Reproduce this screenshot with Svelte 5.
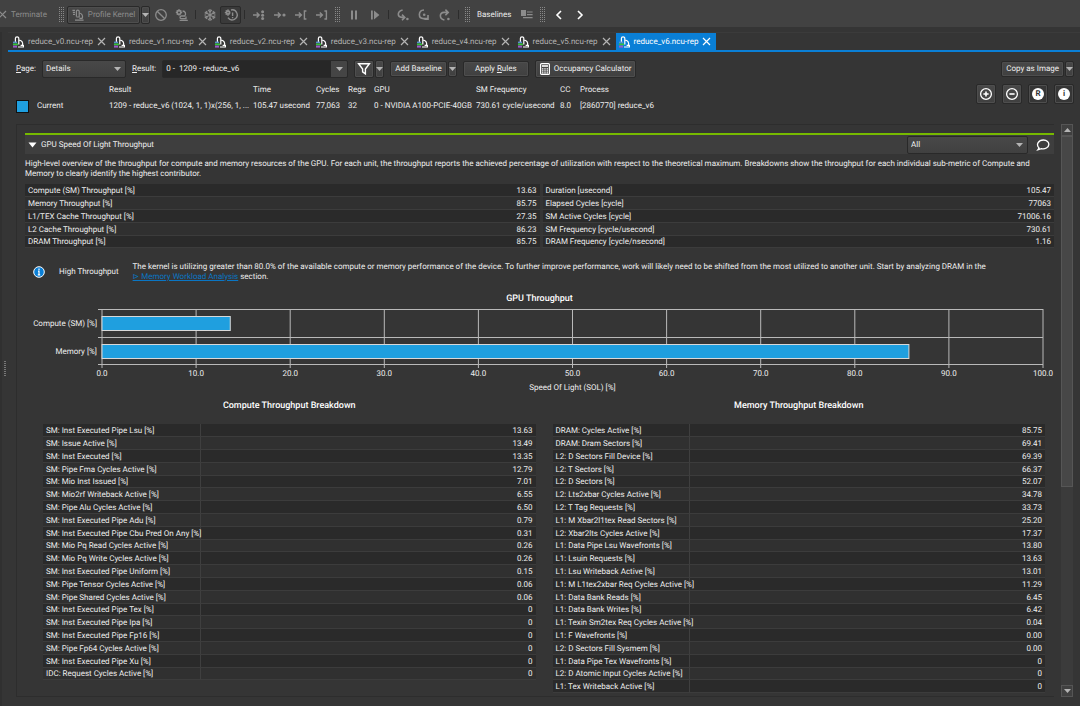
<script lang="ts">
	const tabs = ['v0', 'v1', 'v2', 'v3', 'v4', 'v5', 'v6'].map((v) => `reduce_${v}.ncu-rep`);
	let activeTab = $state(6);
	let open = $state(true);

	const speedOfLight = [
		['Compute (SM) Throughput [%]', '13.63', 'Duration [usecond]', '105.47'],
		['Memory Throughput [%]', '85.75', 'Elapsed Cycles [cycle]', '77063'],
		['L1/TEX Cache Throughput [%]', '27.35', 'SM Active Cycles [cycle]', '71006.16'],
		['L2 Cache Throughput [%]', '86.23', 'SM Frequency [cycle/usecond]', '730.61'],
		['DRAM Throughput [%]', '85.75', 'DRAM Frequency [cycle/nsecond]', '1.16']
	];

	const bars = [
		{ label: 'Compute (SM) [%]', value: 13.63, y: 7 },
		{ label: 'Memory [%]', value: 85.75, y: 35 }
	];
	const ticks = [0, 10, 20, 30, 40, 50, 60, 70, 80, 90, 100];

	const breakdowns = [
		{
			title: 'Compute Throughput Breakdown',
			kind: 'compute',
			rows: [
				['SM: Inst Executed Pipe Lsu [%]', '13.63'],
				['SM: Issue Active [%]', '13.49'],
				['SM: Inst Executed [%]', '13.35'],
				['SM: Pipe Fma Cycles Active [%]', '12.79'],
				['SM: Mio Inst Issued [%]', '7.01'],
				['SM: Mio2rf Writeback Active [%]', '6.55'],
				['SM: Pipe Alu Cycles Active [%]', '6.50'],
				['SM: Inst Executed Pipe Adu [%]', '0.79'],
				['SM: Inst Executed Pipe Cbu Pred On Any [%]', '0.31'],
				['SM: Mio Pq Read Cycles Active [%]', '0.26'],
				['SM: Mio Pq Write Cycles Active [%]', '0.26'],
				['SM: Inst Executed Pipe Uniform [%]', '0.15'],
				['SM: Pipe Tensor Cycles Active [%]', '0.06'],
				['SM: Pipe Shared Cycles Active [%]', '0.06'],
				['SM: Inst Executed Pipe Tex [%]', '0'],
				['SM: Inst Executed Pipe Ipa [%]', '0'],
				['SM: Inst Executed Pipe Fp16 [%]', '0'],
				['SM: Pipe Fp64 Cycles Active [%]', '0'],
				['SM: Inst Executed Pipe Xu [%]', '0'],
				['IDC: Request Cycles Active [%]', '0']
			]
		},
		{
			title: 'Memory Throughput Breakdown',
			kind: 'memory',
			rows: [
				['DRAM: Cycles Active [%]', '85.75'],
				['DRAM: Dram Sectors [%]', '69.41'],
				['L2: D Sectors Fill Device [%]', '69.39'],
				['L2: T Sectors [%]', '66.37'],
				['L2: D Sectors [%]', '52.07'],
				['L2: Lts2xbar Cycles Active [%]', '34.78'],
				['L2: T Tag Requests [%]', '33.73'],
				['L1: M Xbar2l1tex Read Sectors [%]', '25.20'],
				['L2: Xbar2lts Cycles Active [%]', '17.37'],
				['L1: Data Pipe Lsu Wavefronts [%]', '13.80'],
				['L1: Lsuin Requests [%]', '13.63'],
				['L1: Lsu Writeback Active [%]', '13.01'],
				['L1: M L1tex2xbar Req Cycles Active [%]', '11.29'],
				['L1: Data Bank Reads [%]', '6.45'],
				['L1: Data Bank Writes [%]', '6.42'],
				['L1: Texin Sm2tex Req Cycles Active [%]', '0.04'],
				['L1: F Wavefronts [%]', '0.00'],
				['L2: D Sectors Fill Sysmem [%]', '0.00'],
				['L1: Data Pipe Tex Wavefronts [%]', '0'],
				['L2: D Atomic Input Cycles Active [%]', '0'],
				['L1: Tex Writeback Active [%]', '0']
			]
		}
	];
</script>

{#snippet microscope(colored: boolean)}
	<svg class="icon" viewBox="0 0 12 12" width="12" height="12" fill="none" stroke="currentColor">
		{#if colored}
			<g stroke="#fff" stroke-width="1.2">
				<path d="M3.4 6.2 V2.4 C3.4 0.4 6.8 0.4 6.8 2.4 V8.6 M6.8 4 C9.6 4.2 11.4 6.6 10.4 9.2 M6 11 H11.4 V9.4 H8.6" />
			</g>
			<path d="M1 6.4 H5" stroke="#5a8fd0" stroke-width="1.6" />
			<path d="M1 8.4 H6" stroke="#35c43a" stroke-width="1.8" />
			<path d="M1 10.6 H5" stroke="#9a5ac8" stroke-width="2" />
		{:else}
			<path d="M4.4 7.4 V2.4 C4.4 0.6 7.2 0.6 7.2 2.4 V8 H4.4 M7.2 4 C10 4.4 11.4 7 10 9.6 M3 11.2 H11.6 M7.4 9.4 H10.6" stroke-width="1.2" />
			<path d="M0.4 1.4 H3 M0.8 3.4 H3 M1 5.4 H3" stroke-width="1.2" />
		{/if}
	</svg>
{/snippet}

{#snippet cross()}
	<svg class="icon" viewBox="0 0 9 9" width="9" height="9" fill="none" stroke="currentColor" stroke-width="1.2">
		<path d="M1 1 L8 8 M8 1 L1 8" />
	</svg>
{/snippet}

{#snippet caret()}
	<svg class="icon" viewBox="0 0 7 4" width="7" height="4"><path d="M0 0 H7 L3.5 4 Z" fill="#b4b4b4" /></svg>
{/snippet}

<div class="app">
	<header class="toolbar">
		<button class="tool terminate" disabled>{@render cross()}<span>Terminate</span></button>
		<span class="grip"></span>
		<button class="raised profile" disabled>{@render microscope(false)}Profile Kernel</button>
		<button class="raised drop" disabled aria-label="Profile options">{@render caret()}</button>
		<button class="tool" aria-label="Cancel">
			<svg viewBox="0 0 14 14" width="14" height="14" fill="none" stroke="currentColor" stroke-width="1.3">
				<circle cx="7" cy="7" r="5.3" /><path d="M3.2 3.2 L10.8 10.8" />
			</svg>
		</button>
		<button class="tool" aria-label="Profile series">
			<svg viewBox="0 0 14 14" width="14" height="14" fill="none" stroke="currentColor" stroke-width="1.1">
				<circle cx="4" cy="4.4" r="1.8" stroke-width="1.6" /><path d="M4 1 V2.4 M4 6.4 V7.8 M0.8 4.4 H2 M6 4.4 H7.2 M1.8 2.2 L2.6 3 M6.2 2.2 L5.4 3 M1.8 6.6 L2.6 5.8" />
				<path d="M7.6 3 C10.4 3.2 11.4 5.6 9.8 8 H6.4 C4.6 8 4.4 10.4 6.4 10.6 H11 V8.6 M4.6 12.4 H12.8" stroke-width="1.3" />
			</svg>
		</button>
		<span class="sep"></span>
		<button class="tool" aria-label="Freeze">
			<svg viewBox="0 0 14 14" width="14" height="14" fill="none" stroke="currentColor" stroke-width="1.2">
				<path d="M7 1 V13 M1.8 4 L12.2 10 M12.2 4 L1.8 10" />
				<path d="M5.2 2 L7 3.8 L8.8 2 M5.2 12 L7 10.2 L8.8 12 M1.6 6.2 L4 5.4 L3.6 2.8 M12.4 7.8 L10 8.6 L10.4 11.2 M12.4 6.2 L10 5.4 L10.4 2.8 M1.6 7.8 L4 8.6 L3.6 11.2" />
			</svg>
		</button>
		<button class="tool pressed" aria-label="Auto profile">
			<svg viewBox="0 0 14 14" width="14" height="14" fill="none" stroke="currentColor" stroke-width="1.2">
				<circle cx="4" cy="4.6" r="1.6" stroke-width="1.8" /><path d="M4 1.2 V2.6 M4 6.6 V8 M0.8 4.6 H2 M1.8 2.4 L2.6 3.2 M1.8 6.8 L2.6 6" />
				<path d="M7 2 A5 5 0 1 1 4 9.6 M8.6 4.4 V8 M8.6 9 V10.2" stroke-width="1.4" />
			</svg>
		</button>
		<span class="sep"></span>
		<button class="tool" aria-label="Next call">
			<svg viewBox="0 0 14 14" width="14" height="14" fill="none" stroke="currentColor" stroke-width="1.4">
				<path d="M1 7 H7 M4.6 4.4 L7.2 7 L4.6 9.6" />
				<g fill="currentColor" stroke="none"><circle cx="10.6" cy="3.8" r="1.5" /><circle cx="10.6" cy="7.2" r="1.5" /><circle cx="10.6" cy="10.6" r="1.5" /></g>
			</svg>
		</button>
		<button class="tool" aria-label="Next kernel">
			<svg viewBox="0 0 14 14" width="14" height="14" fill="none" stroke="currentColor" stroke-width="1.4">
				<path d="M1 7 H7 M4.8 4.6 L7.4 7 L4.8 9.4" /><circle cx="11" cy="7" r="1.6" fill="currentColor" stroke="none" />
			</svg>
		</button>
		<button class="tool" aria-label="Range start">
			<svg viewBox="0 0 14 14" width="14" height="14" fill="none" stroke="currentColor" stroke-width="1.4">
				<path d="M1 7 H7 M4.8 4.6 L7.4 7 L4.8 9.4 M12.4 3 H10.4 V11 H12.4" />
			</svg>
		</button>
		<button class="tool" aria-label="Range end">
			<svg viewBox="0 0 14 14" width="14" height="14" fill="none" stroke="currentColor" stroke-width="1.4">
				<path d="M1 7 H7 M4.8 4.6 L7.4 7 L4.8 9.4 M9.4 3 H11.4 V11 H9.4" />
			</svg>
		</button>
		<span class="grip"></span>
		<button class="tool" aria-label="Pause">
			<svg viewBox="0 0 14 14" width="14" height="14" fill="currentColor"><path d="M4 2.4 H6 V11.6 H4 Z M8 2.4 H10 V11.6 H8 Z" /></svg>
		</button>
		<button class="tool" aria-label="Resume">
			<svg viewBox="0 0 14 14" width="14" height="14" fill="currentColor"><path d="M3 2.4 H4.8 V11.6 H3 Z M6 2.4 L11.4 7 L6 11.6 Z" /></svg>
		</button>
		<span class="sep"></span>
		<button class="tool" aria-label="Step in">
			<svg viewBox="0 0 14 14" width="14" height="14" fill="none" stroke="currentColor" stroke-width="1.6">
				<path d="M6.6 2 C1 3.4 1 9 6 9.4 H8 M6 6.6 L8.8 9.4 L6 12.2" /><circle cx="11.4" cy="11" r="1.3" fill="currentColor" stroke="none" />
			</svg>
		</button>
		<button class="tool" aria-label="Step over">
			<svg viewBox="0 0 14 14" width="14" height="14" fill="none" stroke="currentColor" stroke-width="1.6">
				<path d="M7 2 C0.8 2.6 1 10.4 6.6 10.6 H10.4 M11 7 V11.2 H7.4" /><circle cx="7.2" cy="6.8" r="1.3" fill="currentColor" stroke="none" />
			</svg>
		</button>
		<button class="tool" aria-label="Step out">
			<svg viewBox="0 0 14 14" width="14" height="14" fill="none" stroke="currentColor" stroke-width="1.6">
				<path d="M6.4 12 C0.8 10.8 1.4 4.6 6 4.4 H9.4 M7.4 1.6 L10.2 4.4 L7.4 7.2" /><circle cx="10.4" cy="11" r="1.3" fill="currentColor" stroke="none" />
			</svg>
		</button>
		<span class="sep"></span>
		<span class="grip"></span>
		<span class="baselines">Baselines</span>
		<button class="tool" aria-label="Baseline list">
			<svg viewBox="0 0 14 14" width="14" height="14" fill="currentColor"><path d="M1 2 H6 V8 H1 Z M7 3.4 H12.6 V4.6 H7 Z M7 6 H12.6 V7.2 H7 Z M3 9 H12.6 V10.2 H3 Z" /></svg>
		</button>
		<span class="grip"></span>
		<button class="tool nav" aria-label="Back">
			<svg viewBox="0 0 14 14" width="14" height="14" fill="none" stroke="currentColor" stroke-width="1.6"><path d="M9 3 L5 7 L9 11" /></svg>
		</button>
		<button class="tool nav" aria-label="Forward">
			<svg viewBox="0 0 14 14" width="14" height="14" fill="none" stroke="currentColor" stroke-width="1.6"><path d="M5 3 L9 7 L5 11" /></svg>
		</button>
	</header>

	<div class="workspace">
		<div class="splitter"><span class="handle"></span></div>
		<main class="document">
			<nav class="tabs">
				{#each tabs as tab, i (tab)}
					<button class="tab" class:active={i === activeTab} onclick={() => (activeTab = i)}>
						{@render microscope(true)}
						<span>{tab}</span>
						{@render cross()}
					</button>
				{/each}
			</nav>

			<div class="controls">
				<label for="page"><u>P</u>age:</label>
				<span class="select page">
					<select id="page"><option>Details</option></select>
					{@render caret()}
				</span>
				<label for="result"><u>R</u>esult:</label>
				<span class="select result">
					<select id="result"><option>0 -&nbsp; 1209 - reduce_v6</option></select>
					{@render caret()}
				</span>
				<span class="pair">
					<button class="raised filter" aria-label="Filter">
						<svg viewBox="0 0 14 14" width="14" height="14" fill="none" stroke="#fff" stroke-width="1.4"><path d="M1.6 1.8 H12.4 L8.4 7 V11.8 L5.6 9.8 V7 Z" /></svg>
					</button>
					<button class="raised drop" aria-label="Filter options">{@render caret()}</button>
				</span>
				<span class="pair">
					<button class="raised small">Add Baseline</button>
					<button class="raised small drop" aria-label="Baseline options">{@render caret()}</button>
				</span>
				<button class="raised small apply"><span>Apply <u>R</u>ules</span></button>
				<button class="raised occupancy">
					<svg viewBox="0 0 10 12" width="10" height="12">
						<rect x="0.6" y="0.6" width="8.8" height="10.8" rx="1" fill="none" stroke="#fff" stroke-width="1.2" />
						<path d="M2 3 H8" stroke="#fff" stroke-width="1.6" />
						<path d="M2 5.8 H8 M2 7.8 H8 M2 9.8 H8" stroke="#fff" stroke-width="1.2" stroke-dasharray="1.4 0.9" />
					</svg>
					Occupancy Calculator
				</button>
				<span class="pair copy">
					<button class="raised small">Copy as Image</button>
					<button class="raised small drop" aria-label="Copy options">{@render caret()}</button>
				</span>
			</div>

			<div class="summary">
				<table class="results">
					<thead>
						<tr>
							<th class="c-name"></th>
							<th class="c-result">Result</th>
							<th class="c-time">Time</th>
							<th class="c-cycles">Cycles</th>
							<th class="c-regs">Regs</th>
							<th class="c-gpu">GPU</th>
							<th class="c-freq">SM Frequency</th>
							<th class="c-cc">CC</th>
							<th>Process</th>
						</tr>
					</thead>
					<tbody>
						<tr>
							<td><span class="current"><i class="swatch"></i>Current</span></td>
							<td>1209 - reduce_v6 (1024, 1, 1)x(256, 1, ...</td>
							<td>105.47 usecond</td>
							<td>77,063</td>
							<td>32</td>
							<td>0 - NVIDIA A100-PCIE-40GB</td>
							<td>730.61 cycle/usecond</td>
							<td>8.0</td>
							<td>[2860770] reduce_v6</td>
						</tr>
					</tbody>
				</table>
				<div class="round-buttons">
					<button class="raised" aria-label="Expand all">
						<svg viewBox="0 0 14 14" width="14" height="14" fill="none" stroke="#fff" stroke-width="1.3"><circle cx="7" cy="7" r="5.4" /><path d="M4.4 7 H9.6 M7 4.4 V9.6" stroke-width="1.6" /></svg>
					</button>
					<button class="raised" aria-label="Collapse all">
						<svg viewBox="0 0 14 14" width="14" height="14" fill="none" stroke="#fff" stroke-width="1.3"><circle cx="7" cy="7" r="5.4" /><path d="M4.4 7 H9.6" stroke-width="1.6" /></svg>
					</button>
					<button class="raised flat" aria-label="Rules"><span class="disc">R</span></button>
					<button class="raised flat" aria-label="Info"><span class="disc">i</span></button>
				</div>
			</div>

			<div class="scroll-area">
				<div class="content">
					<section>
						<div class="section-head">
							<button class="toggle" aria-expanded={open} onclick={() => (open = !open)}>
								<svg viewBox="0 0 9 6" width="9" height="6"><path d="M0.5 0.5 H8.5 L4.5 5.5 Z" fill="#fff" /></svg>
								GPU Speed Of Light Throughput
							</button>
							<span class="select scope">
								<select aria-label="Breakdown scope"><option>All</option></select>
								{@render caret()}
							</span>
							<button class="tool comment" aria-label="Comment">
								<svg viewBox="0 0 14 14" width="14" height="14" fill="none" stroke="#fff" stroke-width="1.3"><path d="M3 10 C-0.4 6.4 2.6 2 7.4 2 C11 2 13 4.4 12.8 6.6 C12.6 9.6 9 11.4 5.4 10.6 L1.8 11.8 Z" /></svg>
							</button>
						</div>
						{#if open}
							<p class="overview">
								High-level overview of the throughput for compute and memory resources of the GPU. For each unit, the
								throughput reports the achieved percentage of utilization with respect to the theoretical maximum.
								Breakdowns show the throughput for each individual sub-metric of Compute and Memory to clearly identify
								the highest contributor.
							</p>

							<table class="metrics speed">
								<tbody>
									{#each speedOfLight as [leftName, leftValue, rightName, rightValue]}
										<tr>
											<td>{leftName}</td>
											<td class="num">{leftValue}</td>
											<td class="second">{rightName}</td>
											<td class="num">{rightValue}</td>
										</tr>
									{/each}
								</tbody>
							</table>

							<div class="advice">
								<svg viewBox="0 0 12 12" width="12" height="12">
									<circle cx="6" cy="6" r="5.3" fill="#0a7fd6" stroke="#fff" stroke-width="1" />
									<path d="M6 2.6 V4 M5 5.2 H6 V8.6 M4.8 8.8 H7.2" stroke="#fff" stroke-width="1.2" fill="none" />
								</svg>
								<span class="advice-title">High Throughput</span>
								<p>
									The kernel is utilizing greater than 80.0% of the available compute or memory performance of the
									device. To further improve performance, work will likely need to be shifted from the most utilized
									to another unit. Start by analyzing DRAM in the <a href="#memory">⊳&nbsp;Memory Workload Analysis</a> section.
								</p>
							</div>

							<h3>GPU Throughput</h3>
							<svg class="chart" width="100%" height="84">
								<g stroke="#b9b9b9">
									{#each ticks as tick}
										<line x1="{tick}%" x2="{tick}%" y1="0" y2="59" />
									{/each}
									<line x1="-4" x2="100%" y1="0.5" y2="0.5" />
									<line x1="-4" x2="100%" y1="28.5" y2="28.5" />
									<line x1="-4" x2="100%" y1="55.5" y2="55.5" />
								</g>
								{#each bars as bar}
									<rect x="0" y={bar.y + 0.5} width="{bar.value}%" height="14" fill="#1f9fdf" stroke="#d8d8d8" />
									<text x="-5" y={bar.y + 10} text-anchor="end">{bar.label}</text>
								{/each}
								{#each ticks as tick}
									<text x="{tick}%" y="67" text-anchor="middle">{tick.toFixed(1)}</text>
								{/each}
								<text x="50%" y="81" text-anchor="middle">Speed Of Light (SOL) [%]</text>
							</svg>

							<div class="breakdowns">
								{#each breakdowns as breakdown (breakdown.kind)}
									<div class="breakdown {breakdown.kind}">
										<h3>{breakdown.title}</h3>
										<table class="metrics">
											<tbody>
												{#each breakdown.rows as [name, value]}
													<tr>
														<td class="name">{name}</td>
														<td class="num">{value}</td>
													</tr>
												{/each}
											</tbody>
										</table>
									</div>
								{/each}
							</div>
						{/if}
					</section>
				</div>
				<div class="scrollbar">
					<button aria-label="Scroll up"><svg viewBox="0 0 7 4" width="7" height="4"><path d="M0 4 H7 L3.5 0 Z" fill="#b4b4b4" /></svg></button>
					<div class="track"><div class="thumb"></div></div>
					<button aria-label="Scroll down">{@render caret()}</button>
				</div>
			</div>
		</main>
	</div>
</div>

<style>
	:global(body) {
		background: #353535;
	}

	.app {
		display: flex;
		flex-direction: column;
		min-height: 100vh;
		background: #353535;
		color: #eee;
		font: 8px/10px Roboto, sans-serif;
		text-rendering: geometricPrecision;
	}

	.app * {
		box-sizing: border-box;
	}

	button,
	select {
		font: inherit;
		color: inherit;
		text-rendering: inherit;
		margin: 0;
		padding: 0;
		border: 0;
		background: none;
	}

	svg {
		display: block;
		flex-shrink: 0;
	}

	h3 {
		margin: 0;
		font-size: 9px;
		line-height: 12px;
		font-weight: 500;
		text-align: center;
		color: #fff;
	}

	.toolbar {
		display: flex;
		align-items: center;
		height: 27px;
		padding-top: 2px;
		background: #424242;
		color: #8c8c8c;
		white-space: nowrap;
	}

	.tool {
		display: flex;
		align-items: center;
		justify-content: center;
		width: 21px;
		height: 18px;
		flex-shrink: 0;
	}

	.terminate {
		width: 58px;
		justify-content: flex-start;
		gap: 4px;
		margin-left: -2px;
	}

	.grip {
		width: 5px;
		height: 15px;
		margin: 0 3px;
		background:
			repeating-linear-gradient(transparent 0 1px, #424242 1px 2px),
			repeating-linear-gradient(90deg, #888 0 1px, transparent 1px 2px);
	}

	.sep {
		width: 1px;
		height: 9px;
		margin: 0 3px;
		background: #2c2c2c;
	}

	.raised {
		display: flex;
		align-items: center;
		justify-content: center;
		gap: 4px;
		height: 18px;
		border: 1px solid #292929;
		border-radius: 2px;
		background: linear-gradient(#484848, #404040);
		box-shadow: inset 0 0 0 1px #4e4e4e;
		white-space: nowrap;
	}

	.raised.small {
		height: 16px;
		padding: 0 4px;
	}

	.raised.drop {
		width: 9px;
		padding: 0;
		margin-left: 1px;
	}

	.profile {
		width: 73px;
	}

	.pressed {
		border: 1px solid #2a2a2a;
		border-radius: 2px;
		background: #3a3a3a;
	}

	.baselines {
		margin: 0 5px 0 4px;
		color: #eee;
	}

	.nav {
		color: #fff;
	}

	.workspace {
		display: flex;
		flex: 1;
		padding-top: 5px;
	}

	.splitter {
		display: flex;
		align-items: center;
		justify-content: center;
		width: 8px;
		border-left: 2px solid #303030;
	}

	.handle {
		width: 2px;
		height: 16px;
		background: repeating-linear-gradient(#777 0 1px, transparent 1px 2px);
	}

	.document {
		flex: 1;
		min-width: 0;
		display: flex;
		flex-direction: column;
	}

	.tabs {
		display: flex;
		padding-left: 2px;
		border-top: 1px solid #3b3b3b;
		border-bottom: 2px solid #0a7fd6;
	}

	.tab {
		display: flex;
		align-items: center;
		gap: 4px;
		height: 17px;
		padding: 0 5px 0 2px;
		color: #b4b4b4;
		white-space: nowrap;
	}

	.tab.active {
		background: #0a7fd6;
		color: #fff;
	}

	.controls {
		display: flex;
		align-items: center;
		gap: 6px;
		padding: 8px 6px 0 8px;
	}

	.select {
		position: relative;
		display: flex;
		height: 18px;
	}

	.select select {
		appearance: none;
		width: 100%;
		padding: 0 3px;
		border: 1px solid #292929;
		border-radius: 2px;
		background: linear-gradient(#484848, #404040);
		outline: 0;
	}

	.select .icon {
		position: absolute;
		right: 5px;
		top: 7px;
		pointer-events: none;
	}

	.page {
		width: 84px;
	}

	.result {
		width: 186px;
	}

	.result select {
		background: linear-gradient(#454545, #454545) right / 16px 100% no-repeat #272727;
	}

	.pair {
		display: flex;
	}

	.filter {
		width: 20px;
	}

	.apply {
		width: 66px;
	}

	.occupancy {
		padding: 0 4px;
	}

	.copy {
		margin-left: auto;
	}

	.summary {
		display: flex;
		align-items: flex-start;
		justify-content: space-between;
		padding: 6px 6px 0 8px;
	}

	.results {
		border-collapse: collapse;
		table-layout: fixed;
		width: 700px;
		white-space: nowrap;
	}

	.results th,
	.results td {
		padding: 0;
		font-weight: 400;
		text-align: left;
		height: 12px;
	}

	.results td {
		height: 20px;
	}

	.c-name {
		width: 93px;
	}

	.c-result {
		width: 144px;
	}

	.c-time {
		width: 63px;
	}

	.c-cycles {
		width: 32px;
	}

	.c-regs {
		width: 26px;
	}

	.c-gpu {
		width: 102px;
	}

	.c-freq {
		width: 84px;
	}

	.c-cc {
		width: 20px;
	}

	.current {
		display: flex;
		align-items: center;
		gap: 8px;
	}

	.swatch {
		width: 13px;
		height: 13px;
		border: 1px solid #111;
		background: #1f9fdf;
	}

	.round-buttons {
		display: flex;
		gap: 6px;
	}

	.round-buttons .raised {
		width: 20px;
		height: 20px;
	}

	.round-buttons .flat {
		background: #363636;
	}

	.disc {
		width: 12px;
		height: 12px;
		border-radius: 50%;
		background: #fff;
		color: #333;
		font-weight: 700;
		line-height: 12px;
		text-align: center;
	}

	.scroll-area {
		display: flex;
		flex: 1;
		gap: 7px;
		margin: 8px 7px 9px 8px;
	}

	.content {
		flex: 1;
		min-width: 0;
		padding: 8px 0 0 8px;
		border: 1px solid #2d2d2d;
		border-right: 0;
	}

	.section-head {
		display: flex;
		align-items: center;
		height: 21px;
		border-top: 2px solid #76b900;
		background: #3e3e3e;
	}

	.toggle {
		display: flex;
		align-items: center;
		gap: 4px;
		flex: 1;
		height: 18px;
		padding-left: 3px;
	}

	.scope {
		width: 121px;
	}

	.comment {
		margin: 0 1px 0 4px;
	}

	.overview {
		margin: 0;
		padding: 5px 0;
	}

	.metrics {
		width: 100%;
		border-collapse: separate;
		border-spacing: 0;
		table-layout: fixed;
		white-space: nowrap;
	}

	.metrics td {
		height: 13px;
		padding: 0 3px;
		line-height: 11px;
		border-bottom: 1px solid #3c3c3c;
		background: #303030;
	}

	.metrics tr:nth-child(odd) td {
		background: #2a2a2a;
	}

	.metrics tr:nth-child(5n) td {
		height: 12px;
	}

	.metrics .num {
		text-align: right;
	}

	.metrics .second {
		border-left: 3px solid #353535;
	}

	.advice {
		display: flex;
		align-items: center;
		gap: 14px;
		padding: 14px 32px 0 8px;
	}

	.advice p {
		margin: 0;
	}

	.advice-title {
		white-space: nowrap;
	}

	a {
		color: #0a76c4;
	}

	.advice + h3 {
		padding: 11px 0 4px;
	}

	.chart {
		width: calc(100% - 88px);
		margin-left: 77px;
		overflow: visible;
	}

	.chart text {
		fill: #eee;
	}

	.breakdowns {
		display: flex;
		align-items: flex-start;
		gap: 17px;
		padding: 7px 9px 0 18px;
	}

	.breakdown {
		flex: 1;
	}

	.breakdown h3 {
		padding-bottom: 12px;
	}

	.breakdown .name {
		border-right: 1px solid #3f3f3f;
	}

	.compute .name {
		width: 32%;
	}

	.memory .name {
		width: 28%;
	}

	.scrollbar {
		display: flex;
		flex-direction: column;
		width: 12px;
		background: #3b3b3b;
	}

	.scrollbar button {
		display: flex;
		align-items: center;
		justify-content: center;
		height: 12px;
		border: 1px solid #555;
		background: #404040;
	}

	.track {
		flex: 1;
	}

	.thumb {
		height: 64%;
		border: 1px solid #565656;
		background: #474747;
	}
</style>
